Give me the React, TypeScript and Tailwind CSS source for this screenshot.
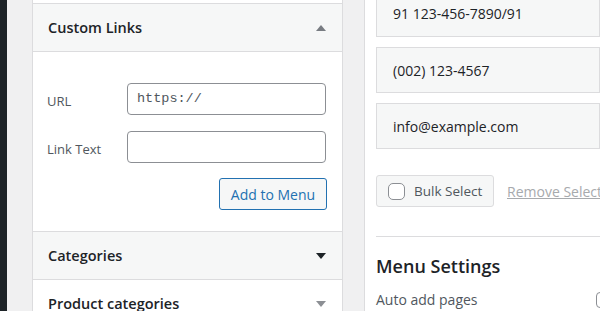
import React from "react";

const font = { fontFamily: '"Open Sans", "Noto Sans", sans-serif' };

function TriUp({ color }: { color: string }) {
  return (
    <svg width="10" height="6" viewBox="0 0 10 6">
      <polygon points="0,6 10,6 5,0" fill={color} />
    </svg>
  );
}
function TriDown({ color }: { color: string }) {
  return (
    <svg width="10" height="6" viewBox="0 0 10 6">
      <polygon points="0,0 10,0 5,6" fill={color} />
    </svg>
  );
}

export default function App() {
  return (
    <div
      className="w-[600px] h-[311px] overflow-hidden flex bg-[#f0f0f1] text-[#1d2327]"
      style={font}
    >
      <div className="w-[7px] shrink-0 bg-[#1d2327]" />
      <div className="w-[25px] shrink-0" />
      {/* Left panel */}
      <div className="w-[311px] shrink-0 bg-white border-x border-[#dcdcde] flex flex-col">
        <div className="h-[4px] shrink-0 bg-white border-b border-[#dcdcde]" />
        <div className="h-[48px] shrink-0 bg-[#f6f7f7] border-b border-[#dcdcde] flex items-center justify-between pl-[15px] pr-[16px]">
          <span className="text-[14.5px] font-semibold text-[#1d2327]">Custom Links</span>
          <TriUp color="#787c82" />
        </div>
        <div className="h-[179px] shrink-0 flex flex-col pl-[14px] pr-[15px] pt-[31px]">
          <div className="flex items-center h-[32px]">
            <span className="w-[80px] pt-[5px] text-[13px] text-[#50575e]">URL</span>
            <div className="w-[199px] h-[32px] border border-[#8c8f94] rounded-[4px] flex items-center pl-[9px]">
              <span
                className="text-[13.5px] text-[#50575e] pt-[1px]"
                style={{ fontFamily: '"Liberation Mono", "DejaVu Sans Mono", monospace' }}
              >
                https://
              </span>
            </div>
          </div>
          <div className="flex items-center h-[32px] mt-[16px]">
            <span className="w-[80px] pt-[5px] text-[13px] text-[#50575e]">Link Text</span>
            <div className="w-[199px] h-[32px] border border-[#8c8f94] rounded-[4px]" />
          </div>
          <div className="flex justify-end mt-[15px]">
            <div className="w-[108px] h-[32px] border border-[#2271b1] rounded-[3px] bg-[#f6f7f7] flex items-center justify-center text-[14px] text-[#2271b1] whitespace-nowrap">
              Add to Menu
            </div>
          </div>
        </div>
        <div className="h-[48px] shrink-0 bg-[#f6f7f7] border-t border-[#dcdcde] flex items-center justify-between pl-[15px] pr-[16px]">
          <span className="text-[14.5px] font-semibold text-[#1d2327]">Categories</span>
          <TriDown color="#1d2327" />
        </div>
        <div className="h-[48px] shrink-0 bg-white border-t border-[#dcdcde] flex items-center justify-between pl-[15px] pr-[16px]">
          <span className="text-[14.5px] font-semibold text-[#1d2327]">Product categories</span>
          <TriDown color="#8c8f94" />
        </div>
      </div>
      <div className="w-[21px] shrink-0" />
      {/* Right panel */}
      <div className="flex-1 bg-white border-l border-[#dcdcde] pl-[11px] flex flex-col min-w-0">
        <div className="mt-[-10px] h-[47px] shrink-0 bg-[#f6f7f7] border border-[#dcdcde] flex items-center pl-[16px] text-[14px] text-[#1d2327] whitespace-nowrap">
          91 123-456-7890/91
        </div>
        <div className="mt-[10px] h-[46px] shrink-0 bg-[#f6f7f7] border border-[#dcdcde] flex items-center pl-[16px] text-[14px] text-[#1d2327] whitespace-nowrap">
          (002) 123-4567
        </div>
        <div className="mt-[10px] h-[46px] shrink-0 bg-[#f6f7f7] border border-[#dcdcde] flex items-center pl-[16px] text-[14px] text-[#1d2327] whitespace-nowrap">
          info@example.com
        </div>
        <div className="mt-[26px] flex items-center shrink-0 whitespace-nowrap">
          <div className="w-[118px] h-[32px] shrink-0 border border-[#dcdcde] rounded-[3px] bg-[#f6f7f7] flex items-center pl-[11px]">
            <div className="w-[17px] h-[17px] shrink-0 border border-[#8c8f94] rounded-[5px] bg-white" />
            <span className="ml-[9px] text-[13.5px] text-[#50575e]">Bulk Select</span>
          </div>
          <span className="ml-[13px] shrink-0 text-[14px] text-[#a7aaad] underline">Remove Selected Items</span>
        </div>
        <div className="mt-[29px] h-px shrink-0 bg-[#dcdcde]" />
        <div className="mt-[17px] text-[18px] font-semibold text-[#1d2327] leading-[24px] whitespace-nowrap">
          Menu Settings
        </div>
        <div className="mt-[11px] flex items-center justify-between whitespace-nowrap">
          <span className="text-[14px] text-[#50575e]">Auto add pages</span>
          <div className="w-[16px] h-[16px] border border-[#8c8f94] rounded-[4px] mr-[-12px]" />
        </div>
      </div>
    </div>
  );
}
